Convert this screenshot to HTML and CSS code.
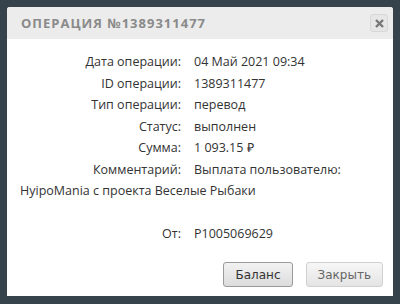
FILE: index.html
```html
<!DOCTYPE html>
<html lang="ru">
<head>
  <meta charset="UTF-8">
  <title>Операция</title>
  <link rel="stylesheet" href="styles.css">
</head>
<body>
  <div class="dialog">
    <div class="dialog-head">
      <span class="dialog-title">Операция №1389311477</span>
      <button class="close-btn" title="Закрыть">
        <svg width="9" height="9" viewBox="0 0 9 9"><path d="M1 1L8 8M8 1L1 8" stroke="#777" stroke-width="2.4"/></svg>
      </button>
    </div>
    <div class="dialog-body">
      <div class="row"><span class="label">Дата операции:</span><span>04 Май 2021 09:34</span></div>
      <div class="row"><span class="label">ID операции:</span><span>1389311477</span></div>
      <div class="row"><span class="label">Тип операции:</span><span>перевод</span></div>
      <div class="row"><span class="label">Статус:</span><span>выполнен</span></div>
      <div class="row"><span class="label">Сумма:</span><span>1 093.15 ₽</span></div>
      <div class="row"><span class="label">Комментарий:</span><span>Выплата пользователю:</span></div>
      <div class="comment">HyipoMania с проекта Веселые Рыбаки</div>
      <div class="spacer"></div>
      <div class="row"><span class="label">От:</span><span>P1005069629</span></div>
    </div>
    <div class="dialog-foot">
      <button class="btn btn-active">Баланс</button>
      <button class="btn">Закрыть</button>
    </div>
  </div>
</body>
</html>
```

FILE: styles.css
```css
body {
  margin: 0;
  background: #37434c;
  font-family: "Open Sans", sans-serif;
}

.dialog {
  margin: 7px;
  width: 386px;
  height: 289px;
  background: #fff;
  border-radius: 3px 3px 0 0;
  display: flex;
  flex-direction: column;
}

.dialog-head {
  height: 32px;
  background: #ececec;
  border-radius: 3px 3px 0 0;
  display: flex;
  align-items: center;
  justify-content: space-between;
  padding: 0 5px 0 14px;
}

.dialog-title {
  text-transform: uppercase;
  font-weight: bold;
  font-size: 13px;
  letter-spacing: 1px;
  color: #8a8a8a;
}

.close-btn {
  width: 18px;
  height: 18px;
  padding: 0;
  border: 1px solid #d8d8d8;
  border-radius: 3px;
  background: #e6e6e6;
  display: flex;
  align-items: center;
  justify-content: center;
}

.dialog-body {
  padding: 12px 0 0 13px;
  font-size: 12.5px;
  color: #333;
  flex: 1;
}

.row {
  display: grid;
  grid-template-columns: 161px auto;
  column-gap: 13px;
  line-height: 21.5px;
}

.label {
  text-align: right;
}

.comment {
  line-height: 21.5px;
}

.spacer {
  height: 21.5px;
}

.dialog-foot {
  display: flex;
  justify-content: flex-end;
  gap: 13px;
  padding: 0 10px 9px 0;
}

.btn {
  height: 25px;
  padding: 0 11px;
  font-family: "DejaVu Sans", sans-serif;
  font-size: 12px;
  color: #666;
  background: linear-gradient(#f7f7f7, #e4e4e4);
  border: 1px solid #d0d0d0;
  border-radius: 3px;
}

.btn-active {
  color: #333;
  border-color: #9a9a9a;
  background: linear-gradient(#f2f2f2, #dcdcdc);
}
```
